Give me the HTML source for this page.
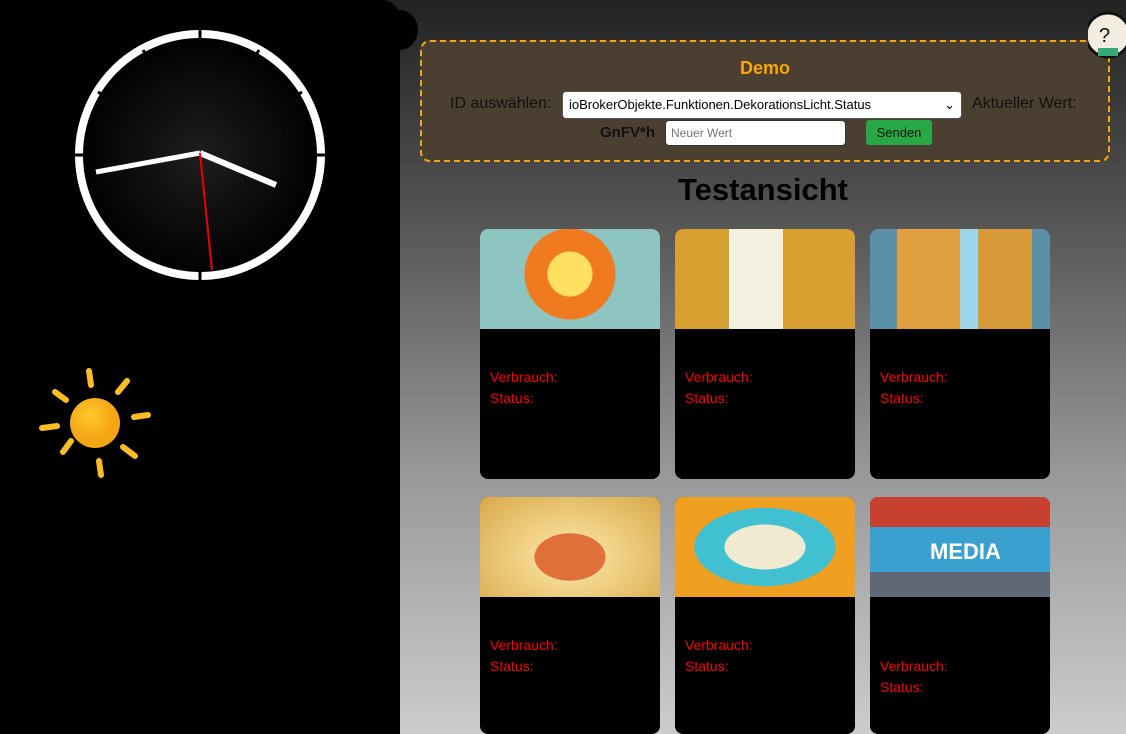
<!DOCTYPE html>
<html style="width:1126px;height:734px;overflow:hidden"><head><meta charset="utf-8"><style>
*{box-sizing:border-box;margin:0;padding:0}
body{width:1126px;height:734px;overflow:hidden;font-family:"Liberation Sans",Arial,sans-serif;background:linear-gradient(#222 0%,#555 30%,#999 65%,#ccc 100%);position:relative}
.left{position:absolute;left:0;top:0;width:400px;height:734px;background:#000;border-top-right-radius:18px}
.dot{position:absolute;left:382px;top:10px;width:36px;height:40px;border-radius:50%;background:#000}
.demo{position:absolute;left:420px;top:40px;width:690px;height:122px;border:2px dashed #f0a818;border-radius:10px;background:#4a3f30;text-align:center}
.demo h3{color:#ffa500;font-size:18px;margin-top:16px;font-weight:bold}
.row1{position:absolute;top:50px;left:0;width:100%;font-size:16px;color:#111}
.sel{position:absolute;left:140px;top:49px;width:400px;height:28px;background:#fff;border:1px solid #555;border-radius:4px;font-size:13px;text-align:left;padding:5px 6px;color:#000}
.inp{position:absolute;left:243px;top:78px;width:181px;height:26px;background:#fff;border:1px solid #333;border-radius:4px;font-size:12px;text-align:left;padding:5px 5px;color:#777}
.btn{position:absolute;left:444px;top:78px;width:66px;height:25px;background:#28a745;border-radius:3px;color:#111;font-size:13px;padding-top:5px}
h1{position:absolute;left:400px;width:726px;top:172px;text-align:center;font-size:31px;color:#000;font-weight:bold}
.card{position:absolute;width:180px;height:250px;background:#000;border-radius:8px;overflow:hidden}
.card .img{height:100px}
.card p{color:#f00;font-size:14px;line-height:21px;padding-left:10px}
</style></head><body>
<div class="left"></div><div class="dot"></div>
<svg style="position:absolute;left:0;top:0" width="400" height="500">
<defs><radialGradient id="g"><stop offset="0" stop-color="#1e1e1e"/><stop offset="1" stop-color="#000"/></radialGradient>
<radialGradient id="s" cx=".4" cy=".35"><stop offset="0" stop-color="#ffc82a"/><stop offset="1" stop-color="#f5a414"/></radialGradient></defs>
<circle cx="200" cy="155" r="121" fill="url(#g)" stroke="#fff" stroke-width="8"/>
<g stroke="#000" stroke-width="3">
<line x1="200" y1="30" x2="200" y2="38"/><line x1="200" y1="272" x2="200" y2="280"/>
<line x1="75" y1="155" x2="83" y2="155"/><line x1="317" y1="155" x2="325" y2="155"/>
<line x1="143" y1="50" x2="146" y2="55"/><line x1="259" y1="50" x2="256" y2="55"/>
<line x1="98" y1="92" x2="103" y2="95"/><line x1="302" y1="92" x2="297" y2="95"/>
</g>
<g fill="#0a0a0a" font-size="22" font-family="Liberation Sans">
<text x="188" y="70">12</text><text x="284" y="160">3</text><text x="193" y="245">6</text><text x="104" y="160">9</text></g>
<line x1="200" y1="153" x2="276" y2="185" stroke="#fff" stroke-width="6"/>
<line x1="200" y1="153" x2="96" y2="172" stroke="#fff" stroke-width="5"/>
<line x1="200" y1="153" x2="212" y2="270" stroke="#e00" stroke-width="2"/>
<circle cx="95" cy="423" r="25" fill="url(#s)"/>
<g stroke="#fbbc24" stroke-width="6" stroke-linecap="round">
<line x1="89" y1="371" x2="91" y2="385"/><line x1="127" y1="381" x2="118" y2="392"/>
<line x1="134" y1="417" x2="148" y2="415"/><line x1="123" y1="447" x2="135" y2="456"/>
<line x1="99" y1="461" x2="101" y2="475"/><line x1="63" y1="452" x2="71" y2="441"/>
<line x1="42" y1="428" x2="57" y2="426"/><line x1="55" y1="392" x2="66" y2="400"/>
</g></svg>
<div class="demo"><h3>Demo</h3>
<div class="row1"><span style="position:absolute;left:28px;top:3px">ID auswählen:</span><span style="position:absolute;left:550px;top:3px">Aktueller Wert:</span></div>
<div class="sel">ioBrokerObjekte.Funktionen.DekorationsLicht.Status<span style="position:absolute;right:6px">⌄</span></div>
<span style="position:absolute;left:178px;top:82px;font-weight:bold;font-size:15px;color:#111">GnFV*h</span>
<div class="inp">Neuer Wert</div><div class="btn">Senden</div></div>
<svg style="position:absolute;left:1088px;top:10px" width="40" height="50"><circle cx="20" cy="25" r="22" fill="#f3ece0" stroke="#111" stroke-width="3"/><text x="11" y="32" font-size="20" font-family="Liberation Sans" fill="#111">?</text><rect x="10" y="38" width="20" height="8" fill="#3a7"/></svg>
<h1>Testansicht</h1>
<div class="card" style="left:480px;top:229px"><div class="img" style="background:radial-gradient(circle at 50% 45%,#ffe060 0 22px,#f07a20 23px 45px,#8fc5c0 46px)"></div><p style="margin-top:38px">Verbrauch:<br>Status:</p></div>
<div class="card" style="left:675px;top:229px"><div class="img" style="background:linear-gradient(90deg,#d8a030 0 30%,#f4f0e0 30% 60%,#d8a030 60%)"></div><p style="margin-top:38px">Verbrauch:<br>Status:</p></div>
<div class="card" style="left:870px;top:229px"><div class="img" style="background:linear-gradient(90deg,#5a90a8 0 15%,#e0a040 15% 50%,#9cd6e8 50% 60%,#d89a38 60% 90%,#5a90a8 90%)"></div><p style="margin-top:38px">Verbrauch:<br>Status:</p></div>
<div class="card" style="left:480px;top:497px;height:237px"><div class="img" style="background:radial-gradient(ellipse at 50% 60%,#e0703a 0 35px,#f4d890 36px,#d8a848)"></div><p style="margin-top:38px">Verbrauch:<br>Status:</p></div>
<div class="card" style="left:675px;top:497px;height:237px"><div class="img" style="background:radial-gradient(ellipse at 50% 50%,#f0ead0 0 40px,#40c0d0 41px 70px,#f0a020 71px)"></div><p style="margin-top:38px">Verbrauch:<br>Status:</p></div>
<div class="card" style="left:870px;top:497px;height:237px"><div class="img" style="background:linear-gradient(#c84030 0 30%,#3aa0d0 30% 75%,#606878 75%);position:relative"><span style="position:absolute;left:60px;top:42px;color:#fff;font-weight:bold;font-size:22px">MEDIA</span></div><p style="margin-top:59px">Verbrauch:<br>Status:</p></div>
</body></html>
